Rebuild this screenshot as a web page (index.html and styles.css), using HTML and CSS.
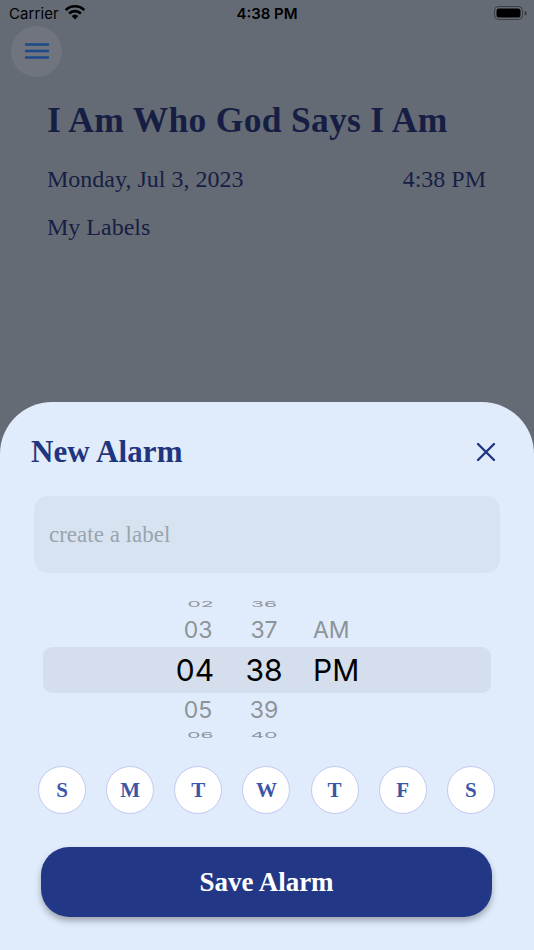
FILE: index.html
```html
<!DOCTYPE html>
<html>
<head>
<meta charset="utf-8">
<link rel="stylesheet" href="styles.css">
</head>
<body>
<div class="screen">
  <div class="statusbar">
    <div class="sb-left">Carrier
      <svg class="wifi" width="22" height="16" viewBox="0 0 22 16"><path d="M11 15.5 L7.6 12 A5 5 0 0 1 14.4 12 Z" fill="#000"/><path d="M4.2 8.6 A9.8 9.8 0 0 1 17.8 8.6 L16 10.4 A7.3 7.3 0 0 0 6 10.4 Z" fill="#000"/><path d="M0.8 5.2 A14.6 14.6 0 0 1 21.2 5.2 L19.4 7 A12.1 12.1 0 0 0 2.6 7 Z" fill="#000"/></svg>
    </div>
    <div class="sb-time">4:38 PM</div>
    <div class="sb-right">
      <svg width="33" height="15" viewBox="0 0 33 15"><rect x="0.5" y="0.5" width="28" height="13" rx="4" fill="none" stroke="#3a3d42" stroke-width="1"/><rect x="2.5" y="2.5" width="24" height="9" rx="2.5" fill="#000"/><path d="M30.5 5 a2 2 0 0 1 0 4.5 z" fill="#3a3d42"/></svg>
    </div>
  </div>
  <div class="topbar">
    <div class="menu-btn">
      <svg width="24" height="16" viewBox="0 0 24 16"><path d="M0 1.5 H24 M0 8 H24 M0 14.5 H24" stroke="#1d4a8a" stroke-width="2.6"/></svg>
    </div>
  </div>
  <main class="content">
    <h1 class="title">I Am Who God Says I Am</h1>
    <div class="dateline"><span>Monday, Jul 3, 2023</span><span>4:38 PM</span></div>
    <div class="labels">My Labels</div>
  </main>

  <section class="sheet">
    <div class="sheet-head">
      <h2 class="sheet-title">New Alarm</h2>
      <svg class="close" width="20" height="20" viewBox="0 0 20 20"><path d="M2 2 L18 18 M18 2 L2 18" stroke="#1f3580" stroke-width="2.4" stroke-linecap="round"/></svg>
    </div>
    <div class="input">create a label</div>
    <div class="picker">
      <div class="prow r-far r-top"><span class="c-h">02</span><span class="c-m">36</span><span class="c-a"></span></div>
      <div class="prow r-near"><span class="c-h">03</span><span class="c-m">37</span><span class="c-a">AM</span></div>
      <div class="prow r-sel"><span class="c-h">04</span><span class="c-m">38</span><span class="c-a">PM</span></div>
      <div class="prow r-near"><span class="c-h">05</span><span class="c-m">39</span><span class="c-a"></span></div>
      <div class="prow r-far r-bot"><span class="c-h">06</span><span class="c-m">40</span><span class="c-a"></span></div>
    </div>
    <div class="days">
      <div class="day">S</div>
      <div class="day">M</div>
      <div class="day">T</div>
      <div class="day">W</div>
      <div class="day">T</div>
      <div class="day">F</div>
      <div class="day">S</div>
    </div>
    <button class="save">Save Alarm</button>
  </section>
</div>
</body>
</html>
```

FILE: styles.css
```css
* { box-sizing: border-box; }
html, body { margin: 0; padding: 0; }
body {
  width: 534px;
  height: 950px;
  overflow: hidden;
  background: #656b74;
  font-family: "Liberation Serif", "DejaVu Serif", serif;
}
.screen {
  width: 534px;
  height: 950px;
  display: flex;
  flex-direction: column;
}
.statusbar {
  height: 27px;
  display: flex;
  align-items: center;
  justify-content: space-between;
  padding: 0 7px 0 9px;
  font-family: Inter, "Liberation Sans", sans-serif;
  font-size: 15px;
  color: #000;
  position: relative;
}
.sb-left { display: flex; align-items: center; gap: 5px; letter-spacing: 0.1px; }
.wifi { margin-top: -3px; }
.sb-time {
  position: absolute;
  left: 0; right: 0;
  text-align: center;
  font-weight: 600;
  pointer-events: none;
}
.sb-right { display: flex; align-items: center; }
.topbar {
  height: 50px;
  padding: 0 0 0 11px;
  display: flex;
  align-items: center;
}
.menu-btn {
  width: 51px;
  height: 51px;
  border-radius: 50%;
  background: #70747c;
  display: flex;
  align-items: center;
  justify-content: center;
  margin-top: -2px;
}
.content {
  padding: 0 48px 0 47px;
  color: #161e44;
}
.title {
  margin: 22px 0 0;
  font-size: 35.5px;
  font-weight: 700;
  line-height: 42px;
  letter-spacing: 0.3px;
}
.dateline {
  margin-top: 23px;
  display: flex;
  justify-content: space-between;
  font-size: 24px;
  line-height: 30px;
}
.labels {
  margin-top: 18px;
  font-size: 24px;
  line-height: 30px;
}
.sheet {
  margin-top: auto;
  height: 548px;
  background: #e0ecfc;
  border-radius: 52px 52px 0 0;
  padding: 30px 34px 0 34px;
  display: flex;
  flex-direction: column;
}
.sheet-head {
  display: flex;
  align-items: center;
  justify-content: space-between;
  padding: 0 4px 0 0;
  margin-left: -3px;
  height: 40px;
}
.sheet-title {
  margin: 0;
  font-size: 31px;
  font-weight: 700;
  color: #1f3580;
  letter-spacing: 0.1px;
}
.input {
  margin-top: 24px;
  height: 77px;
  border-radius: 14px;
  background: #d7e3f1;
  padding: 0 15px;
  display: flex;
  align-items: center;
  font-size: 23px;
  color: #9ba4ae;
}
.picker {
  margin: 19px 9px 0 9px;
  display: flex;
  flex-direction: column;
  font-family: Inter, "Liberation Sans", sans-serif;
}
.prow {
  display: grid;
  grid-template-columns: 125px 60px 6px 60px 19px 1fr;
  align-items: center;
}
.prow .c-h { grid-column: 2; text-align: center; }
.prow .c-m { grid-column: 4; text-align: center; }
.prow .c-a { grid-column: 6; text-align: left; }
.r-far {
  height: 22px;
  font-size: 21px;
  color: #8f959c;
  transform: scaleY(0.38);
}
.r-far .c-h { margin-left: 5px; }
.r-top { align-items: end; }
.r-top > span { transform: translateY(2px); }
.r-bot { align-items: start; margin-top: -2px; }
.r-near {
  height: 32px;
  font-size: 23px;
  color: #8e9398;
}
.r-sel {
  height: 46px;
  margin: 1px 0;
  background: #d4deec;
  border-radius: 9px;
  font-size: 30px;
  color: #000;
}
.r-sel .c-h { margin-left: -6px; }
.days {
  margin: 20px 0 0 4px;
  display: flex;
  justify-content: space-between;
  width: 457px;
}
.day {
  width: 48px;
  height: 48px;
  border-radius: 50%;
  background: #fff;
  border: 1px solid #c3c9f1;
  display: flex;
  align-items: center;
  justify-content: center;
  font-size: 21px;
  font-weight: 700;
  color: #3c56a6;
}
.save {
  margin: 33px 0 0 7px;
  width: 451px;
  height: 70px;
  border: none;
  border-radius: 28px;
  background: #223887;
  color: #fff;
  font-family: "Liberation Serif", "DejaVu Serif", serif;
  font-size: 27px;
  font-weight: 700;
  box-shadow: 0 4px 6px rgba(0,0,0,0.3);
}
```
